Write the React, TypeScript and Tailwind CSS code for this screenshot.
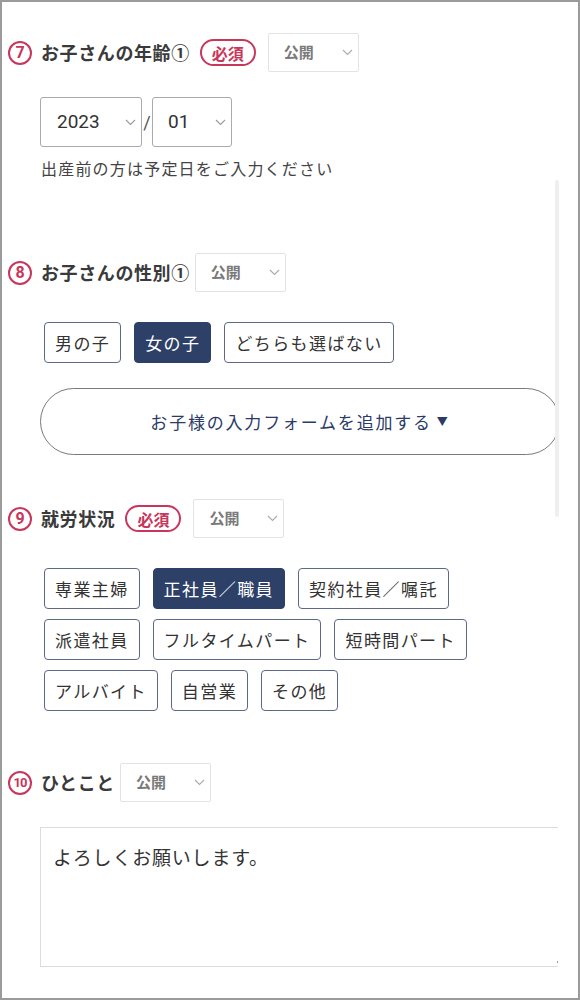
import React from 'react';

const jp = { fontFamily: '"Noto Sans CJK JP", "Noto Sans", sans-serif' };
const num = { fontFamily: 'Roboto, "Noto Sans CJK JP", sans-serif' };

function Chevron({ color = '#9a9a9a' }: { color?: string }) {
  return (
    <svg width="11" height="7" viewBox="0 0 11 7" fill="none">
      <polyline points="1,1 5.5,5.5 10,1" stroke={color} strokeWidth="1.1" />
    </svg>
  );
}

function StepNo({ n }: { n: string }) {
  return (
    <div className="w-[24px] h-[24px] rounded-full border-[2.5px] border-[#c8365b] flex items-center justify-center flex-shrink-0">
      <span
        className={`font-bold text-[#c8365b] leading-none ${n.length > 1 ? 'text-[13px] tracking-[-1px]' : 'text-[16px]'}`}
        style={num}
      >
        {n}
      </span>
    </div>
  );
}

function Required() {
  return (
    <span className="h-[27px] px-[10px] rounded-full border-2 border-[#c8365b] text-[#c8365b] text-[16px] font-bold flex items-center leading-none">
      必須
    </span>
  );
}

function PublicSelect({ className = '' }: { className?: string }) {
  return (
    <div className={`w-[91px] h-[39px] border border-[#e3e3e3] rounded-[2px] flex items-center pl-[15px] pr-[5px] ${className}`}>
      <span className="text-[15px] font-bold text-[#7a7a7a]">公開</span>
      <span className="ml-auto flex">
        <Chevron color="#aaaaaa" />
      </span>
    </div>
  );
}

function Heading({ n, label, required }: { n: string; label: string; required?: boolean }) {
  return (
    <div className="flex items-center pl-[6px]">
      <StepNo n={n} />
      <span className="ml-[9px] text-[18px] font-bold text-[#3a3a3a] tracking-[0.6px] whitespace-nowrap">{label}</span>
      {required ? (
        <>
          <span className="ml-[10px]">
            <Required />
          </span>
          <PublicSelect className="ml-[12px]" />
        </>
      ) : (
        <PublicSelect className="ml-[5px]" />
      )}
    </div>
  );
}

function Chip({ label, active }: { label: string; active?: boolean }) {
  return (
    <span
      className={`h-[41px] px-[10px] rounded-[4px] border flex items-center text-[17px] tracking-[1.4px] whitespace-nowrap ${
        active ? 'bg-[#2d4068] border-[#2d4068] text-white' : 'bg-white border-[#5d6886] text-[#333]'
      }`}
    >
      {label}
    </span>
  );
}

const jobs = [
  ['専業主婦', '正社員／職員', '契約社員／嘱託'],
  ['派遣社員', 'フルタイムパート', '短時間パート'],
  ['アルバイト', '自営業', 'その他'],
];

export default function App() {
  return (
    <div className="w-[580px] h-[1000px] border-2 border-[#9b9b9b] bg-white relative overflow-hidden" style={jp}>
      <div className="w-[556px] h-full overflow-hidden pt-[31px]">
        {/* 7 */}
        <Heading n="7" label="お子さんの年齢①" required />
        <div className="pl-[38px] mt-[25px] flex items-center">
          <div className="w-[102px] h-[50px] border border-[#ababab] rounded-[3px] flex items-center pl-[16px] pr-[5px]">
            <span className="text-[19px] text-[#333]" style={num}>2023</span>
            <span className="ml-auto flex"><Chevron /></span>
          </div>
          <span className="w-[10px] text-center text-[18px] text-[#555]" style={num}>/</span>
          <div className="w-[80px] h-[50px] border border-[#ababab] rounded-[3px] flex items-center pl-[15px] pr-[5px]">
            <span className="text-[19px] text-[#333]" style={num}>01</span>
            <span className="ml-auto flex"><Chevron /></span>
          </div>
        </div>
        <p className="pl-[39px] mt-[9px] text-[16px] leading-[24px] tracking-[1.2px] text-[#444]">
          出産前の方は予定日をご入力ください
        </p>

        {/* 8 */}
        <div className="mt-[73px]">
          <Heading n="8" label="お子さんの性別①" />
        </div>
        <div className="pl-[42px] mt-[30px] flex gap-[13px]">
          <Chip label="男の子" />
          <Chip label="女の子" active />
          <Chip label="どちらも選ばない" />
        </div>
        <div className="pl-[38px] mt-[25px]">
          <div className="w-[520px] h-[67px] rounded-full border border-[#7a7a7a] flex items-center justify-center text-[17px] tracking-[1.8px] text-[#2b3a67]">
            お子様の入力フォームを追加する <span className="ml-[5px] text-[11px]">▼</span>
          </div>
        </div>

        {/* 9 */}
        <div className="mt-[44px]">
          <Heading n="9" label="就労状況" required />
        </div>
        <div className="pl-[42px] mt-[30px] flex flex-col gap-[10px]">
          {jobs.map((row, i) => (
            <div key={i} className="flex gap-[13px]">
              {row.map((j) => (
                <Chip key={j} label={j} active={j === '正社員／職員'} />
              ))}
            </div>
          ))}
        </div>

        {/* 10 */}
        <div className="mt-[52px]">
          <Heading n="10" label="ひとこと" />
        </div>
        <div className="pl-[38px] mt-[25px]">
          <div className="w-[530px] h-[140px] border border-[#dcdcdc] pl-[12px] pt-[15px] text-[19px] tracking-[0.8px] text-[#333] relative">
            よろしくお願いします。
            <span className="absolute left-[516px] bottom-[3px] w-[2px] h-[2px] bg-[#999]" />
          </div>
        </div>
      </div>

      {/* scrollbar track */}
      <div className="absolute left-[553px] top-[178px] w-[4px] h-[337px] bg-[#efefef] rounded-full" />
    </div>
  );
}
